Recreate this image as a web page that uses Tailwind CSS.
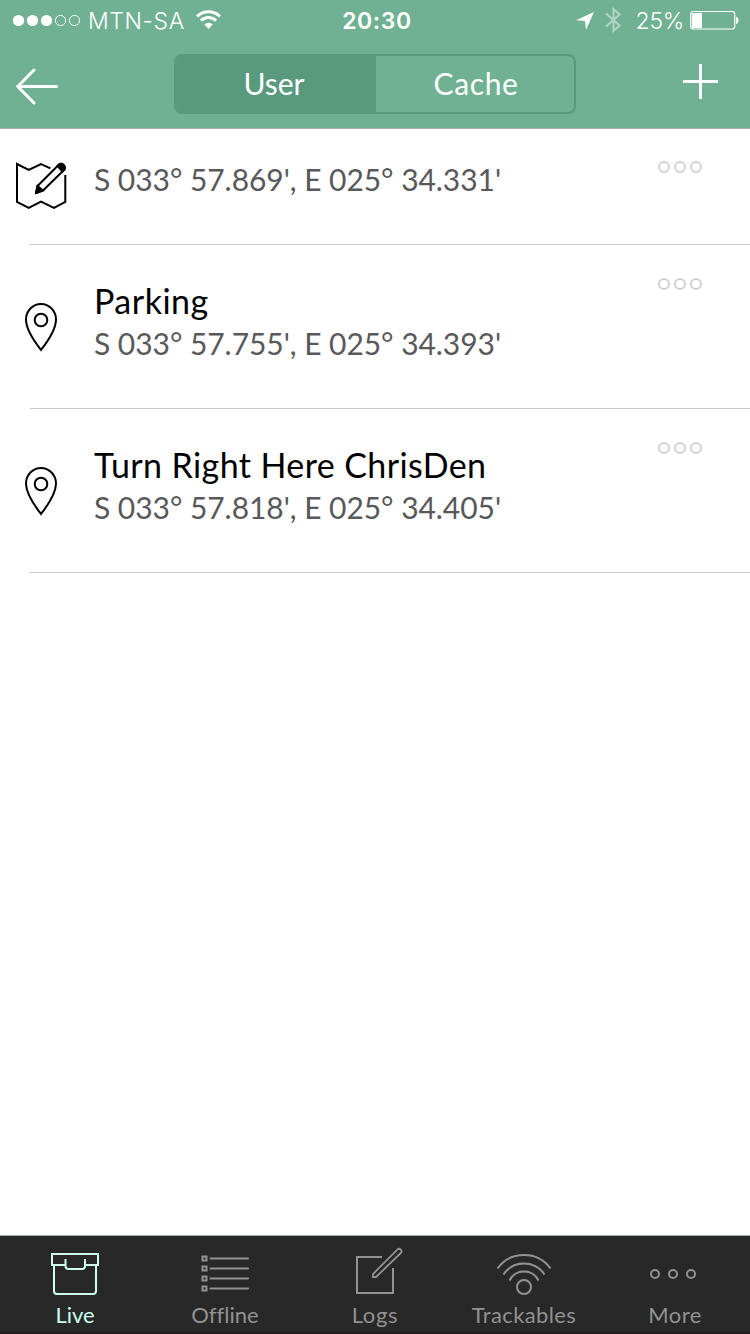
<!DOCTYPE html>
<html lang="en">
<head>
  <meta charset="utf-8" />
  <meta name="viewport" content="width=device-width, initial-scale=1" />
  <title>Waypoints</title>
  <script src="https://cdn.jsdelivr.net/npm/@tailwindcss/browser@4"></script>
</head>
<body class="bg-white font-['Lato',sans-serif] antialiased">
<div class="w-[750px] h-[1334px] flex flex-col overflow-hidden">

  <!-- Status bar + navigation -->
  <header class="h-[129px] shrink-0 bg-[#70b194] border-b border-[#a9aeab] text-white">
    <div class="h-10 grid grid-cols-3 items-center pl-3 pr-[10px] font-['Inter',sans-serif] text-[23px] leading-9">
      <div class="flex items-center">
        <svg class="w-[70px] h-4" viewBox="0 0 70 16" fill="none" stroke="#fff">
          <g fill="#fff" stroke="none"><circle cx="6.5" cy="8.5" r="5.6" /><circle cx="20.5" cy="8.5" r="5.6" /><circle cx="34.5" cy="8.5" r="5.6" /></g>
          <circle cx="48.5" cy="8.5" r="5.1" /><circle cx="62.5" cy="8.5" r="5.1" />
        </svg>
        <span class="ml-[6px] w-[107px] pt-0.5 font-light tracking-[0.6px]">MTN-SA</span>
        <svg class="w-[26px] h-5" viewBox="0 0 26 20" fill="none" stroke="#fff" stroke-width="3">
          <path d="M2 6.500A16.400 16.400 0 0 1 25 6.500" />
          <path d="M6 10.700A10.600 10.600 0 0 1 21 10.700" />
          <path d="M9.300 14.500A6 6 0 0 1 17.700 14.500L13.500 19Z" fill="#fff" stroke="none" />
        </svg>
      </div>
      <span class="pt-0.5 pl-0.5 text-center font-semibold tracking-[0.6px]">20:30</span>
      <div class="flex items-center justify-end">
        <svg class="w-5 h-5" viewBox="0 0 20 20" fill="#fff"><path d="M19 2 11 20 10 11 1 10.200Z" /></svg>
        <svg class="ml-[9px] w-[18px] h-7" viewBox="0 0 18 28" fill="none" stroke="#b2d6c6" stroke-width="2"><path d="M2 7.500 15.500 19.500 9.500 25V3L15.500 8.500 2 20.500" /></svg>
        <span class="ml-[14px] pt-0.5 font-light tracking-[-0.3px]">25%</span>
        <svg class="ml-[6px] w-[50px] h-5" viewBox="0 0 50 20" fill="#fff">
          <rect x="0.700" y="1.500" width="44" height="17.500" rx="2.500" fill="none" stroke="#fff" stroke-width="1.200" />
          <path d="M3 3H12V18H3A1 1 0 0 1 2 17V4A1 1 0 0 1 3 3ZM46 6.500A4 4 0 0 1 46 14Z" />
        </svg>
      </div>
    </div>

    <nav class="h-[88px] flex items-start justify-between pl-[15px] pr-[31px] pt-[14px]">
      <button class="mt-[14px] w-11 h-[38px]" aria-label="Back">
        <svg viewBox="0 0 44 38" fill="none" stroke="#fff" stroke-width="3" stroke-linecap="round" stroke-linejoin="round"><path d="M41.500 18.500H3M19 2 2.700 18.500 19 35" /></svg>
      </button>
      <div class="ml-[8px] w-[402px] h-15 flex rounded-lg border-2 border-[#59997d] overflow-hidden text-[30px] leading-[55px] text-center">
        <div class="w-[200px] bg-[#59997d] pr-1">User</div>
        <div class="flex-1 pl-0.5 tracking-[0.6px]">Cache</div>
      </div>
      <button class="mt-[9px] w-9 h-9" aria-label="Add">
        <svg viewBox="0 0 36 36" stroke="#fff" stroke-width="3"><path d="M0 18.500H35M17.500 1V36" /></svg>
      </button>
    </nav>
  </header>

  <!-- Waypoint list -->
  <main class="flex-1">
    <div class="h-[116px] flex pl-[14px]">
      <svg class="mt-[31px] w-14 h-[52px] shrink-0" viewBox="0 0 56 52" fill="none" stroke="#000" stroke-width="2">
        <path d="M36.500 8.300 27 4 14.700 10 3 4V42L14.700 48 27 41.700 40 48 51.300 42V15" />
        <path d="M23.500 26 45 4.500Q47.500 3 49.500 5T50.500 9.500L29 30.500 22 33Z" stroke-linejoin="round" />
        <path d="M23.500 26 29 30.500 22 33ZM43.500 6 45 4.500Q47.500 3 49.500 5T50.500 9.500L48.500 11.500Z" fill="#000" />
      </svg>
      <div class="ml-6 flex-1 pt-[30px]">
        <p class="text-[30px] leading-[40px] [font-kerning:none] tracking-[-0.05px] text-[#58595b] whitespace-nowrap">S 033° 57.869', E 025° 34.331'</p>
      </div>
      <svg class="mt-[31px] mr-[47px] w-[46px] h-[14px]" viewBox="0 0 46 14" fill="none" stroke="#d1d1d1" stroke-width="2"><circle cx="7" cy="7" r="5" /><circle cx="23" cy="7" r="5" /><circle cx="39" cy="7" r="5" /></svg>
    </div>
    <div class="ml-[30px] -mt-px h-px bg-[#c8c7cc]"></div>

    <div class="h-[164px] flex pl-[23px]">
      <svg class="mt-[56px] w-9 h-[52px] shrink-0" viewBox="0 0 36 52" fill="none" stroke="#000" stroke-width="2">
        <path d="M18 49C13 42.500 3 30 3 18.500A15 15.500 0 0 1 33 18.500C33 30 23 42.500 18 49Z" /><circle cx="18" cy="19" r="6.300" />
      </svg>
      <div class="ml-[35px] flex-1 pt-[34px] whitespace-nowrap">
        <h2 class="text-[34px] leading-[44px] tracking-[0.5px] text-black">Parking</h2>
        <p class="text-[30px] leading-[40px] [font-kerning:none] tracking-[-0.05px] text-[#58595b]">S 033° 57.755', E 025° 34.393'</p>
      </div>
      <svg class="mt-8 mr-[47px] w-[46px] h-[14px]" viewBox="0 0 46 14" fill="none" stroke="#d1d1d1" stroke-width="2"><circle cx="7" cy="7" r="5" /><circle cx="23" cy="7" r="5" /><circle cx="39" cy="7" r="5" /></svg>
    </div>
    <div class="ml-[30px] -mt-px h-px bg-[#c8c7cc]"></div>

    <div class="h-[164px] flex pl-[23px]">
      <svg class="mt-[56px] w-9 h-[52px] shrink-0" viewBox="0 0 36 52" fill="none" stroke="#000" stroke-width="2">
        <path d="M18 49C13 42.500 3 30 3 18.500A15 15.500 0 0 1 33 18.500C33 30 23 42.500 18 49Z" /><circle cx="18" cy="19" r="6.300" />
      </svg>
      <div class="ml-[35px] flex-1 pt-[34px] whitespace-nowrap">
        <h2 class="text-[34px] leading-[44px] tracking-[0.4px] text-black">Turn Right Here ChrisDen</h2>
        <p class="text-[30px] leading-[40px] [font-kerning:none] tracking-[-0.05px] text-[#58595b]">S 033° 57.818', E 025° 34.405'</p>
      </div>
      <svg class="mt-8 mr-[47px] w-[46px] h-[14px]" viewBox="0 0 46 14" fill="none" stroke="#d1d1d1" stroke-width="2"><circle cx="7" cy="7" r="5" /><circle cx="23" cy="7" r="5" /><circle cx="39" cy="7" r="5" /></svg>
    </div>
    <div class="ml-[30px] -mt-px h-px bg-[#c8c7cc]"></div>
  </main>

  <!-- Tab bar -->
  <footer class="h-[99px] shrink-0 grid grid-cols-5 bg-[#282828] border-t border-t-[#a3b0a9] border-b-2 border-b-[#271d22] text-[22px] leading-7 text-[#929292] text-center">
    <div class="flex flex-col items-center pt-[10px] text-[#ccfff0]">
      <svg class="w-15 h-[50px]" viewBox="0 0 60 50" fill="none" stroke="currentColor" stroke-width="2">
        <path d="M21 19H7V8H53V19H40M9 19V45Q9 48 12 48H48Q51 48 51 45V19" />
        <path d="M20.500 13V20Q20.500 23 23.500 23H37Q40 23 40 20V13" />
      </svg>
      <span class="mt-[5px]">Live</span>
    </div>
    <div class="flex flex-col items-center pt-[10px]">
      <svg class="w-15 h-[50px]" viewBox="0 0 60 50" fill="none" stroke="currentColor" stroke-width="2">
        <path d="M7.500 10.500h4v4h-4zM7.500 20.500h4v4h-4zM7.500 30.500h4v4h-4zM7.500 40.500h4v4h-4z" />
        <path d="M15.500 12.500H53M15.500 22.500H53M15.500 32.500H53M15.500 42.500H53" stroke-linecap="round" />
      </svg>
      <span class="mt-[5px] [font-variant-ligatures:none]">Offline</span>
    </div>
    <div class="flex flex-col items-center pt-[10px]">
      <svg class="w-15 h-[50px]" viewBox="0 0 60 50" fill="none" stroke="currentColor" stroke-width="2">
        <path d="M37 11H12V47H48V22" />
        <path d="M28 31V28L52.300 3.700A2.300 2.300 0 0 1 55.800 7L31 31Z" stroke-width="1.800" />
      </svg>
      <span class="mt-[5px] tracking-[0.7px]">Logs</span>
    </div>
    <div class="flex flex-col items-center pt-[10px]">
      <svg class="w-15 h-[50px]" viewBox="0 0 60 50" fill="none" stroke="currentColor" stroke-width="2">
        <path d="M2.500 22.500A32.800 32.800 0 0 1 55.500 22.500M8.500 28.500A24.600 24.600 0 0 1 49.500 28.500M14.500 34.500A16.200 16.200 0 0 1 43.500 34.500" />
        <circle cx="29" cy="41" r="7" />
      </svg>
      <span class="mt-[5px] mr-0.5 tracking-[0.4px]">Trackables</span>
    </div>
    <div class="flex flex-col items-center pt-[10px]">
      <svg class="w-15 h-[50px]" viewBox="0 0 60 50" fill="none" stroke="currentColor" stroke-width="2">
        <circle cx="10" cy="28" r="4" /><circle cx="28" cy="28" r="4" /><circle cx="46" cy="28" r="4" />
      </svg>
      <span class="mt-[5px] tracking-[0.4px]">More</span>
    </div>
  </footer>
</div>
</body>
</html>
